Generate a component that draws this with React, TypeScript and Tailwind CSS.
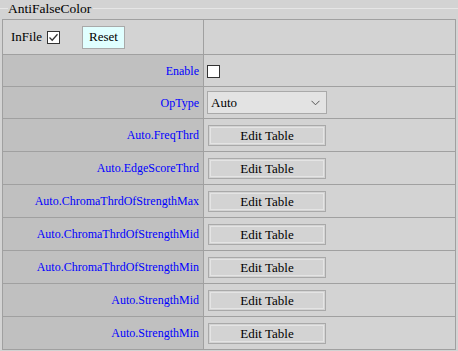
import React from "react";

const rows = [
  "Auto.FreqThrd",
  "Auto.EdgeScoreThrd",
  "Auto.ChromaThrdOfStrengthMax",
  "Auto.ChromaThrdOfStrengthMid",
  "Auto.ChromaThrdOfStrengthMin",
  "Auto.StrengthMid",
  "Auto.StrengthMin",
];

function EditBtn() {
  return (
    <div className="ml-[1px] w-[118px] h-[21px] border border-[#a9a9a9] bg-[#d3d3d3] p-[1px]">
      <div className="w-full h-full border border-[#e4e4e4] flex items-center justify-center text-[13px] text-black leading-none">
        Edit Table
      </div>
    </div>
  );
}

export default function App() {
  return (
    <div className="w-[458px] h-[351px] bg-[#d3d3d3] overflow-hidden font-['Liberation_Serif','Times_New_Roman',serif]">
      <div className="relative pt-[19px]">
        <div className="absolute left-0 right-0 top-[8px] h-[1px] bg-[#e6e6e6]" />
        <div className="absolute left-[8px] top-0 pr-[2px] bg-[#d3d3d3] text-[13.5px] leading-[17px] text-black">AntiFalseColor</div>
        <table className="ml-[2px] w-[454px] border-collapse border border-[#a0a0a0]">
          <tbody>
            <tr className="h-[35px]">
              <td className="w-[201px] border border-[#a0a0a0] bg-[#d3d3d3] pl-[8px] p-0">
                <div className="flex items-center text-[13px] text-black">
                  <span className="w-[36px]">InFile</span>
                  <span className="w-[13px] h-[13px] border border-[#333] bg-white flex items-center justify-center">
                    <svg width="11" height="11" viewBox="0 0 11 11">
                      <path d="M1.5 5.5 L4.2 8.2 L9.5 2.2" fill="none" stroke="#333" strokeWidth="1.3" />
                    </svg>
                  </span>
                  <span className="ml-[22px] w-[43px] h-[23px] p-[1px] border border-[#a9a9a9] bg-[#e0ffff] flex items-center justify-center">
                    <span className="text-[13px]">Reset</span>
                  </span>
                </div>
              </td>
              <td className="border border-[#a0a0a0] bg-[#d3d3d3] p-0"></td>
            </tr>
            <tr className="h-[32px]">
              <td className="border border-[#a0a0a0] bg-[#c0c0c0] p-0 pr-[4px] text-right text-[12px] text-[#0000ff]">Enable</td>
              <td className="border border-[#a0a0a0] bg-[#d3d3d3] p-0 pl-[3px]">
                <div className="w-[13px] h-[13px] border border-[#333] bg-white mt-[1px]" />
              </td>
            </tr>
            <tr className="h-[32px]">
              <td className="border border-[#a0a0a0] bg-[#c0c0c0] p-0 pr-[4px] text-right text-[12px] text-[#0000ff]">OpType</td>
              <td className="border border-[#a0a0a0] bg-[#d3d3d3] p-0 pl-[3px]">
                <div className="w-[120px] h-[23px] border border-[#a9a9a9] bg-[#e3e3e3] flex items-center justify-between pl-[3px] pr-[6px] text-[13px] text-black">
                  <span>Auto</span>
                  <svg width="9" height="6" viewBox="0 0 9 6">
                    <path d="M0.5 0.8 L4.5 4.8 L8.5 0.8" fill="none" stroke="#555" strokeWidth="1" />
                  </svg>
                </div>
              </td>
            </tr>
            {rows.map((r) => (
              <tr key={r} className="h-[33px]">
                <td className="border border-[#a0a0a0] bg-[#c0c0c0] p-0 pr-[4px] text-right text-[12px] text-[#0000ff]">{r}</td>
                <td className="border border-[#a0a0a0] bg-[#d3d3d3] p-0 pl-[3px]">
                  <EditBtn />
                </td>
              </tr>
            ))}
          </tbody>
        </table>
      </div>
    </div>
  );
}
